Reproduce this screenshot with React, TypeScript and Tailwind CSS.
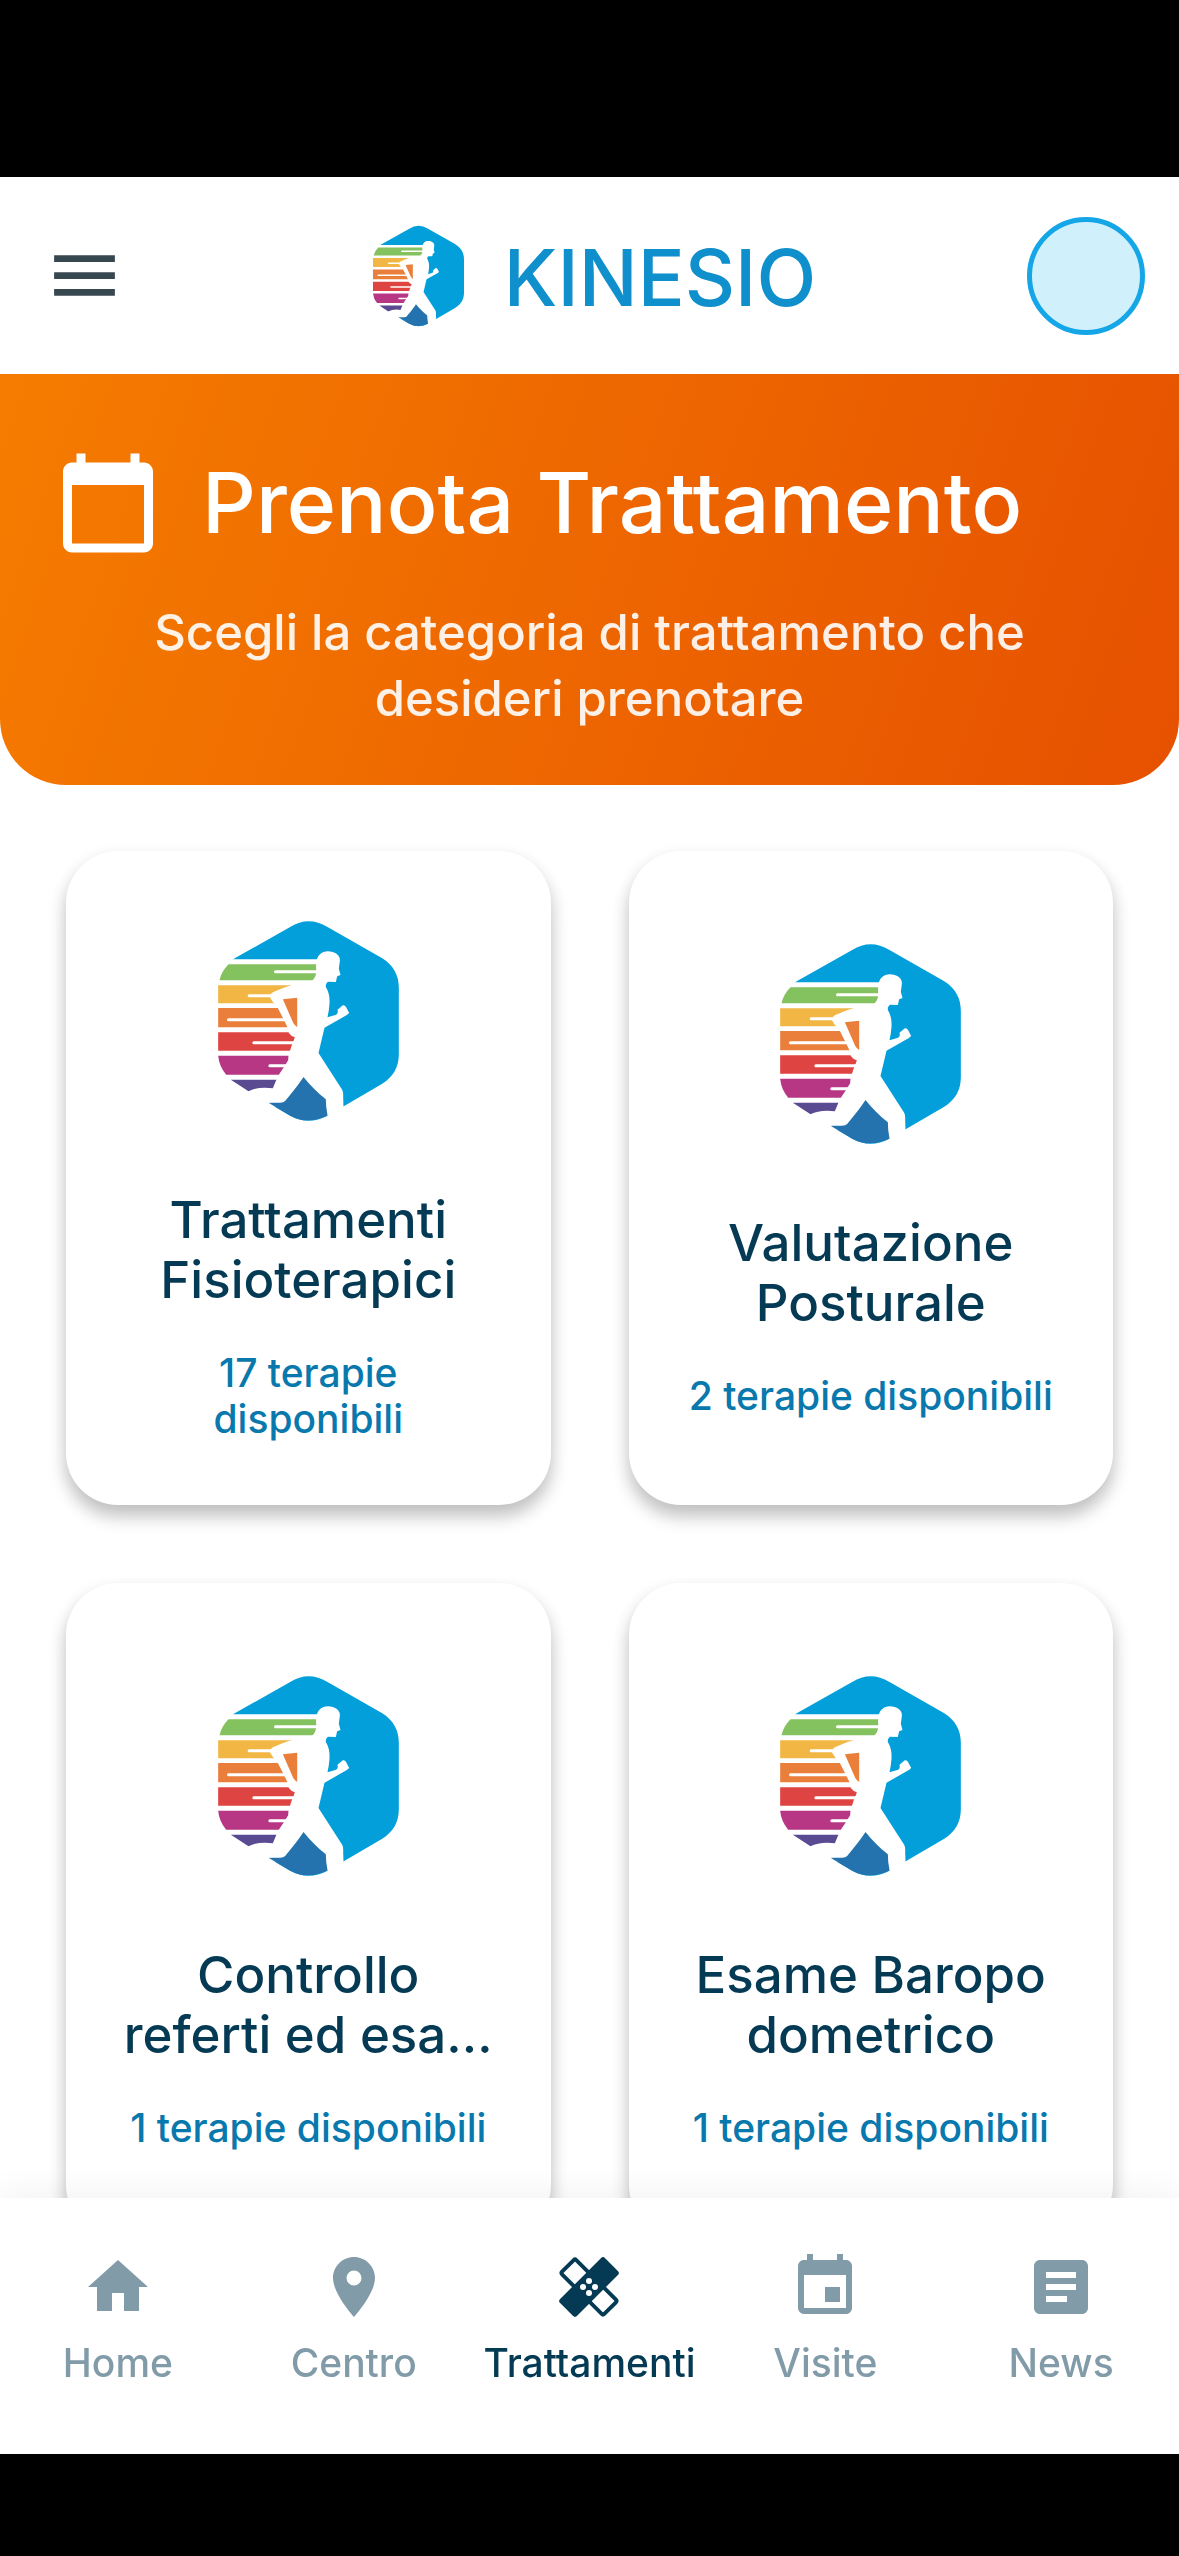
import { useState } from "react";
import type { ReactNode } from "react";
import { MdArticle, MdCalendarToday, MdEvent, MdHome, MdLocationOn, MdMenu } from "react-icons/md";

const categories = [
  { title: "Trattamenti\nFisioterapici", count: "17 terapie\ndisponibili" },
  { title: "Valutazione\nPosturale", count: "2 terapie disponibili" },
  { title: "Controllo\nreferti ed esa…", count: "1 terapie disponibili" },
  { title: "Esame Baropo\ndometrico", count: "1 terapie disponibili" },
];

const tabs: { label: string; icon: ReactNode }[] = [
  { label: "Home", icon: <MdHome className="size-[72px]" /> },
  { label: "Centro", icon: <MdLocationOn className="size-[72px]" /> },
  { label: "Trattamenti", icon: <BandageIcon className="size-[72px]" /> },
  { label: "Visite", icon: <MdEvent className="size-[72px]" /> },
  { label: "News", icon: <MdArticle className="size-[72px]" /> },
];

function BandageIcon({ className }: { className?: string }) {
  return (
    <svg viewBox="0 0 24 24" className={className} aria-hidden="true">
      <g transform="translate(12 12)">
        <rect x="-9.95" y="-3.35" width="19.9" height="6.7" rx="0.6" fill="none" stroke="currentColor" strokeWidth="1.3" transform="rotate(45)" />
        <rect x="-10.6" y="-4" width="21.2" height="8" rx="1" fill="currentColor" transform="rotate(-45)" />
        <g fill="#fff">
          <circle cy="-2" r="1" />
          <circle cy="2" r="1" />
          <circle cx="-2" r="1" />
          <circle cx="2" r="1" />
        </g>
      </g>
    </svg>
  );
}

function Logo({ className }: { className?: string }) {
  return (
    <svg viewBox="54 41 542 642" className={className} aria-hidden="true">
      <path
        fill="#029fdb"
        d="M270 80Q325 45 382 80L545 173C580 195 596 225 596 262V462C596 500 580 530 545 551L382 646Q325 676 270 646L105 549C70 528 54 500 54 462V262C54 225 70 195 105 173Z"
      />
      <path fill="#fff" d="M40 177H352V620H40Z" />
      {/* stripes */}
      <path fill="#84c15f" d="M85 192H352V240H58Q64 213 85 192Z" />
      <path fill="#f2b644" d="M54 255H300V309H54Z" />
      <path fill="#e97f3b" d="M54 323H291V381H54Z" />
      <path fill="#de4441" d="M54 396H300V451H54Z" />
      <path fill="#b73785" d="M54 466H290V523H78Q57 498 54 466Z" />
      <path fill="#5a4a92" d="M92 538H240V573H145Z" />
      <path fill="#2573ae" d="M205 607L270 646Q325 676 390 642V590L310 520L240 600Z" />
      <path stroke="#fff" strokeWidth="9" strokeLinecap="round" d="M226 214H350M147 286H225M85 358H260M161 427H285M209 496H270" />
      {/* runner */}
      <path
        fill="#fff"
        d="M348 205C345 165 364 153 383 153C405 153 421 165 419 182L416 205L421 224L411 228L407 245L383 244Q376 250 377 260C386 275 389 290 388 310Q386 335 382 351L408 343Q415 340 412 328L428 315Q435 314 438 321L447 338L440 344L373 382L355 458L426 568Q430 575 429 590L430 619L432 690H384L382 645Q377 620 377 597C350 575 330 555 310 530C290 560 265 590 255 602Q250 607 240 607H205L130 600L145 573Q165 562 195 562L218 564L228 540L237 522L250 502L264 480L265 465L270 450Q274 435 281 420L284 411Q272 407 266 398L262 381L248 352L233 323L216 302L209 290Q209 281 218 276Q242 264 275 254L335 242Q347 232 348 215Z"
      />
      <path fill="#e97f3b" d="M248 297L291 292V380Q284 376 279 367Z" />
    </svg>
  );
}

function CategoryCard({ title, count }: { title: string; count: string }) {
  return (
    <button
      type="button"
      className="flex min-h-[654px] flex-col items-center justify-center rounded-[52px] bg-white text-center shadow-[0_12px_18px_0_rgba(0,0,0,0.2),0_6px_18px_0_rgba(0,0,0,0.08)]"
    >
      <Logo className="h-[214px] w-[181px]" />
      <span className="mt-[62px] text-[51px] leading-[60px] font-medium whitespace-pre-line text-[#053a54]">{title}</span>
      <span className="mt-10 text-[39px] leading-[46px] font-medium whitespace-pre-line text-[#0878ad]">{count}</span>
    </button>
  );
}

export default function App() {
  const [active, setActive] = useState("Trattamenti");

  return (
    <div className="flex h-screen flex-col bg-black pt-[177px] pb-[102px] font-['Inter','Liberation_Sans',sans-serif]">
      <header className="flex h-[197px] shrink-0 items-center justify-between bg-white px-[34px]">
        <button type="button" aria-label="Menu" className="flex h-[118px] w-32 items-center pl-[10px] text-[#37474f]">
          <MdMenu className="size-[81px]" />
        </button>
        <div className="flex items-center gap-10">
          <Logo className="h-[108px] w-[91px]" />
          <span className="pt-1 text-[78px] leading-[100px] font-medium text-[#0f8fcb]">KINESIO</span>
        </div>
        <button type="button" aria-label="Profilo" className="size-[118px] rounded-full border-[5px] border-[#14a6e7] bg-[#d0f1fc]" />
      </header>

      <main className="flex-1 overflow-y-auto bg-white [scrollbar-width:none]">
        <section className="rounded-b-[66px] bg-[linear-gradient(109deg,#f57c00,#e65100)] px-[54px] pt-[75px] pb-[53px] text-white">
          <div className="flex items-center gap-10">
            <MdCalendarToday className="size-[108px]" />
            <h1 className="text-[84px] leading-[104px] font-medium">Prenota Trattamento</h1>
          </div>
          <p className="mt-[43px] text-center text-[49px] leading-[66px] font-medium whitespace-pre-line text-white/90">
            {"Scegli la categoria di trattamento che\ndesideri prenotare"}
          </p>
        </section>

        <section className="grid grid-cols-2 gap-[78px] p-[66px]">
          {categories.map((c) => (
            <CategoryCard key={c.title} title={c.title} count={c.count} />
          ))}
        </section>
      </main>

      <nav className="z-10 grid h-[256px] shrink-0 grid-cols-5 bg-white shadow-[0_-6px_30px_rgba(0,0,0,0.05)]">
        {tabs.map((tab) => (
          <button
            key={tab.label}
            type="button"
            onClick={() => setActive(tab.label)}
            className={`flex flex-col items-center gap-4 pt-[53px] text-[39px] leading-[48px] font-medium ${active === tab.label ? "text-[#053a54]" : "text-[#829ba8]"}`}
          >
            {tab.icon}
            {tab.label}
          </button>
        ))}
      </nav>
    </div>
  );
}
